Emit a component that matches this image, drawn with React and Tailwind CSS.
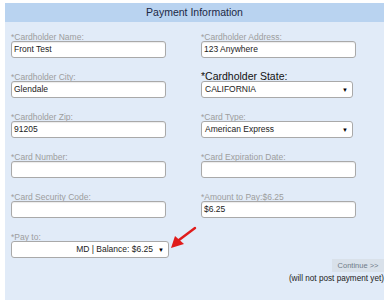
import React from "react";

const Label = ({ children, big }) => (
  <div
    className={`h-[12px] flex items-end leading-none whitespace-nowrap ${
      big ? "text-[10.5px] text-[#111]" : "text-[8.5px] text-[#9d9d9d]"
    }`}
  >
    {children}
  </div>
);

const TextBox = ({ value, w = "w-[155px]" }) => (
  <div
    className={`${w} h-[17px] bg-white border border-[#a9a9a9] rounded-[3px] px-[2px] flex items-center text-[8.5px] text-[#222] leading-none shadow-[inset_0_1px_1px_rgba(0,0,0,0.08)]`}
  >
    {value}
  </div>
);

const SelectBox = ({ value, w = "w-[152px]", right }) => (
  <div
    className={`${w} h-[17px] bg-white border border-[#a9a9a9] rounded-[3px] pl-[3px] pr-[4px] flex items-center text-[8.5px] text-[#222] leading-none`}
  >
    <span className={`flex-1 ${right ? "text-right pr-[5px]" : ""}`}>{value}</span>
    <span className="text-[6px] text-black">▼</span>
  </div>
);

const Field = ({ label, big, children }) => (
  <div className="flex flex-col h-[40px]">
    <Label big={big}>{label}</Label>
    {children}
  </div>
);

export default function App() {
  return (
    <div className="w-[389px] h-[304px] bg-white pt-[3px] pl-[5px] font-['Liberation_Sans',Arial,sans-serif] relative">
      <div className="w-[379px] h-[297px] bg-[#e1ebf8] flex flex-col">
        {/* Header */}
        <div className="h-[19px] bg-[#b9d3f0] flex items-center justify-center text-[10.5px] text-[#1b2845]">
          Payment Information
        </div>

        {/* Body */}
        <div className="pt-[7px] pl-[6px] grid grid-cols-[190px_1fr]">
          <div className="flex flex-col">
            <Field label="*Cardholder Name:">
              <TextBox value="Front Test" />
            </Field>
            <Field label="*Cardholder City:">
              <TextBox value="Glendale" />
            </Field>
            <Field label="*Cardholder Zip:">
              <TextBox value="91205" />
            </Field>
            <Field label="*Card Number:">
              <TextBox value="" />
            </Field>
            <Field label="*Card Security Code:">
              <TextBox value="" />
            </Field>
            <Field label="*Pay to:">
              <SelectBox value="MD | Balance: $6.25" w="w-[158px]" right />
            </Field>
          </div>
          <div className="flex flex-col">
            <Field label="*Cardholder Address:">
              <TextBox value="123 Anywhere" />
            </Field>
            <Field label="*Cardholder State:" big>
              <SelectBox value="CALIFORNIA" />
            </Field>
            <Field label="*Card Type:">
              <SelectBox value="American Express" />
            </Field>
            <Field label="*Card Expiration Date:">
              <TextBox value="" />
            </Field>
            <Field label="*Amount to Pay:$6.25">
              <TextBox value="$6.25" />
            </Field>
            <div className="flex flex-col items-end mt-[30px]">
              <button className="h-[13px] w-[52px] bg-[#d9e1ea] text-[7.5px] text-[#6f7b88] leading-none flex items-center justify-center">
                Continue &gt;&gt;
              </button>
              <div className="mt-[3px] text-[8.2px] text-[#222] leading-none whitespace-nowrap">
                (will not post payment yet)
              </div>
            </div>
          </div>
        </div>
      </div>

      {/* Red annotation arrow */}
      <svg className="absolute left-[166px] top-[225px]" width="34" height="28" viewBox="0 0 34 28">
        <line x1="29" y1="3" x2="13" y2="15" stroke="#e01b1b" strokeWidth="2.4" strokeLinecap="round" />
        <polygon points="5,23 9,11 18,19" fill="#e01b1b" />
      </svg>
    </div>
  );
}
